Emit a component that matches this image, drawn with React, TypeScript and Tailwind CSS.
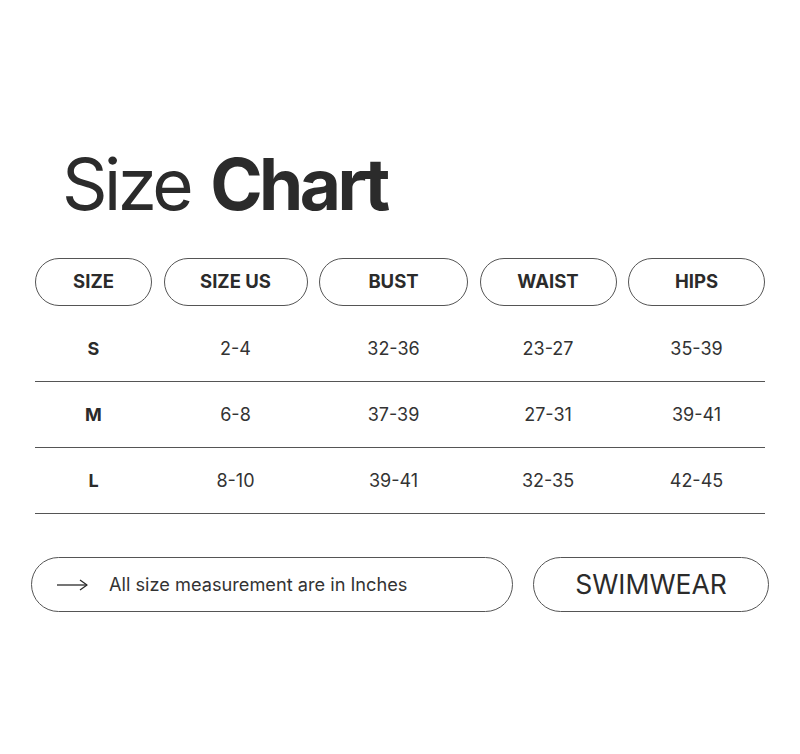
import React from "react";

const headers = ["SIZE", "SIZE US", "BUST", "WAIST", "HIPS"];
const rows = [
  ["S", "2-4", "32-36", "23-27", "35-39"],
  ["M", "6-8", "37-39", "27-31", "39-41"],
  ["L", "8-10", "39-41", "32-35", "42-45"],
];

export default function App() {
  return (
    <div
      className="w-[800px] h-[754px] bg-white text-[#2b2b2b] flex flex-col"
      style={{ fontFamily: "Inter, 'Noto Sans', sans-serif" }}
    >
      <h1 className="mt-[149px] ml-[62px] text-[71px] leading-none tracking-[-0.05em]">
        <span className="font-normal">Size</span>
        <span className="font-bold ml-[20px]">Chart</span>
      </h1>

      <div className="mx-[35px] mt-[38px]">
        <div className="grid grid-cols-[117px_144px_149px_137px_137px] gap-x-[11.5px]">
          {headers.map((h) => (
            <div
              key={h}
              className="h-[48px] rounded-full border border-[#555] flex items-center justify-center text-[18.5px] font-bold"
            >
              {h}
            </div>
          ))}
        </div>
        <div className="mt-[10px]">
          {rows.map((r) => (
            <div
              key={r[0]}
              className="grid grid-cols-[117px_144px_149px_137px_137px] gap-x-[11.5px] h-[66px] border-b border-[#555] items-center"
            >
              {r.map((c, i) => (
                <div
                  key={i}
                  className={`text-center text-[18px] ${i === 0 ? "font-bold" : "font-normal text-[#333]"}`}
                >
                  {c}
                </div>
              ))}
            </div>
          ))}
        </div>
      </div>

      <div className="mx-[31px] mt-[43px] flex gap-[20px]">
        <div className="w-[482px] h-[55px] rounded-full border border-[#555] flex items-center pl-[25px]">
          <svg width="31" height="14" viewBox="0 0 31 14" fill="none" stroke="#2b2b2b" strokeWidth="1.3">
            <path d="M0 7 H30" />
            <path d="M23 2 L30 7 L23 12" strokeLinejoin="round" />
          </svg>
          <span className="ml-[21px] text-[18.2px] text-[#333]">All size measurement are in Inches</span>
        </div>
        <div className="w-[236px] h-[55px] rounded-full border border-[#555] flex items-center justify-center text-[26.5px]">
          SWIMWEAR
        </div>
      </div>
    </div>
  );
}
